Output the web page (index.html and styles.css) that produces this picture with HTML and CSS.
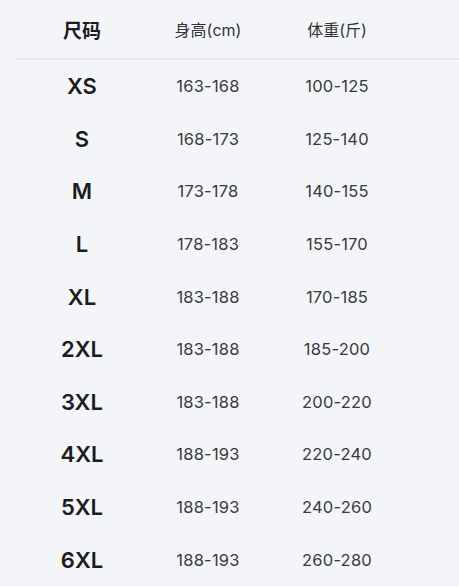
FILE: index.html
```html
<!DOCTYPE html>
<html lang="zh">
<head>
<meta charset="utf-8">
<link rel="stylesheet" href="styles.css">
</head>
<body>
<div class="chart">
  <div class="row head">
    <div class="c size">尺码</div>
    <div class="c">身高(cm)</div>
    <div class="c">体重(斤)</div>
  </div>
  <div class="body">
    <div class="row"><div class="c size">XS</div><div class="c">163-168</div><div class="c">100-125</div></div>
    <div class="row"><div class="c size">S</div><div class="c">168-173</div><div class="c">125-140</div></div>
    <div class="row"><div class="c size">M</div><div class="c">173-178</div><div class="c">140-155</div></div>
    <div class="row"><div class="c size">L</div><div class="c">178-183</div><div class="c">155-170</div></div>
    <div class="row"><div class="c size">XL</div><div class="c">183-188</div><div class="c">170-185</div></div>
    <div class="row"><div class="c size">2XL</div><div class="c">183-188</div><div class="c">185-200</div></div>
    <div class="row"><div class="c size">3XL</div><div class="c">183-188</div><div class="c">200-220</div></div>
    <div class="row"><div class="c size">4XL</div><div class="c">188-193</div><div class="c">220-240</div></div>
    <div class="row"><div class="c size">5XL</div><div class="c">188-193</div><div class="c">240-260</div></div>
    <div class="row"><div class="c size">6XL</div><div class="c">188-193</div><div class="c">260-280</div></div>
  </div>
</div>
</body>
</html>
```
FILE: styles.css
```css
html, body {
  margin: 0;
  padding: 0;
  background: #f4f5f9;
}
body {
  font-family: "Inter", "Noto Sans CJK SC", sans-serif;
  color: #333;
  width: 459px;
  height: 586px;
  overflow: hidden;
}
.chart {
  margin-left: 16px;
}
.row {
  display: grid;
  grid-template-columns: 132px 120px 138px;
  height: 52.6px;
  align-items: center;
}
.head {
  height: 58px;
  border-bottom: 2px solid #e7e8ec;
}
.c {
  text-align: center;
  font-size: 16.5px;
  letter-spacing: 0.2px;
  color: #3a3a3c;
}
.size {
  font-size: 22px;
  font-weight: 600;
  letter-spacing: 0;
  color: #1c1c1e;
}
.head .c {
  font-size: 16px;
  letter-spacing: 0;
  color: #333;
}
.head .size {
  font-size: 19px;
  font-weight: 700;
  color: #1c1c1e;
}
```
